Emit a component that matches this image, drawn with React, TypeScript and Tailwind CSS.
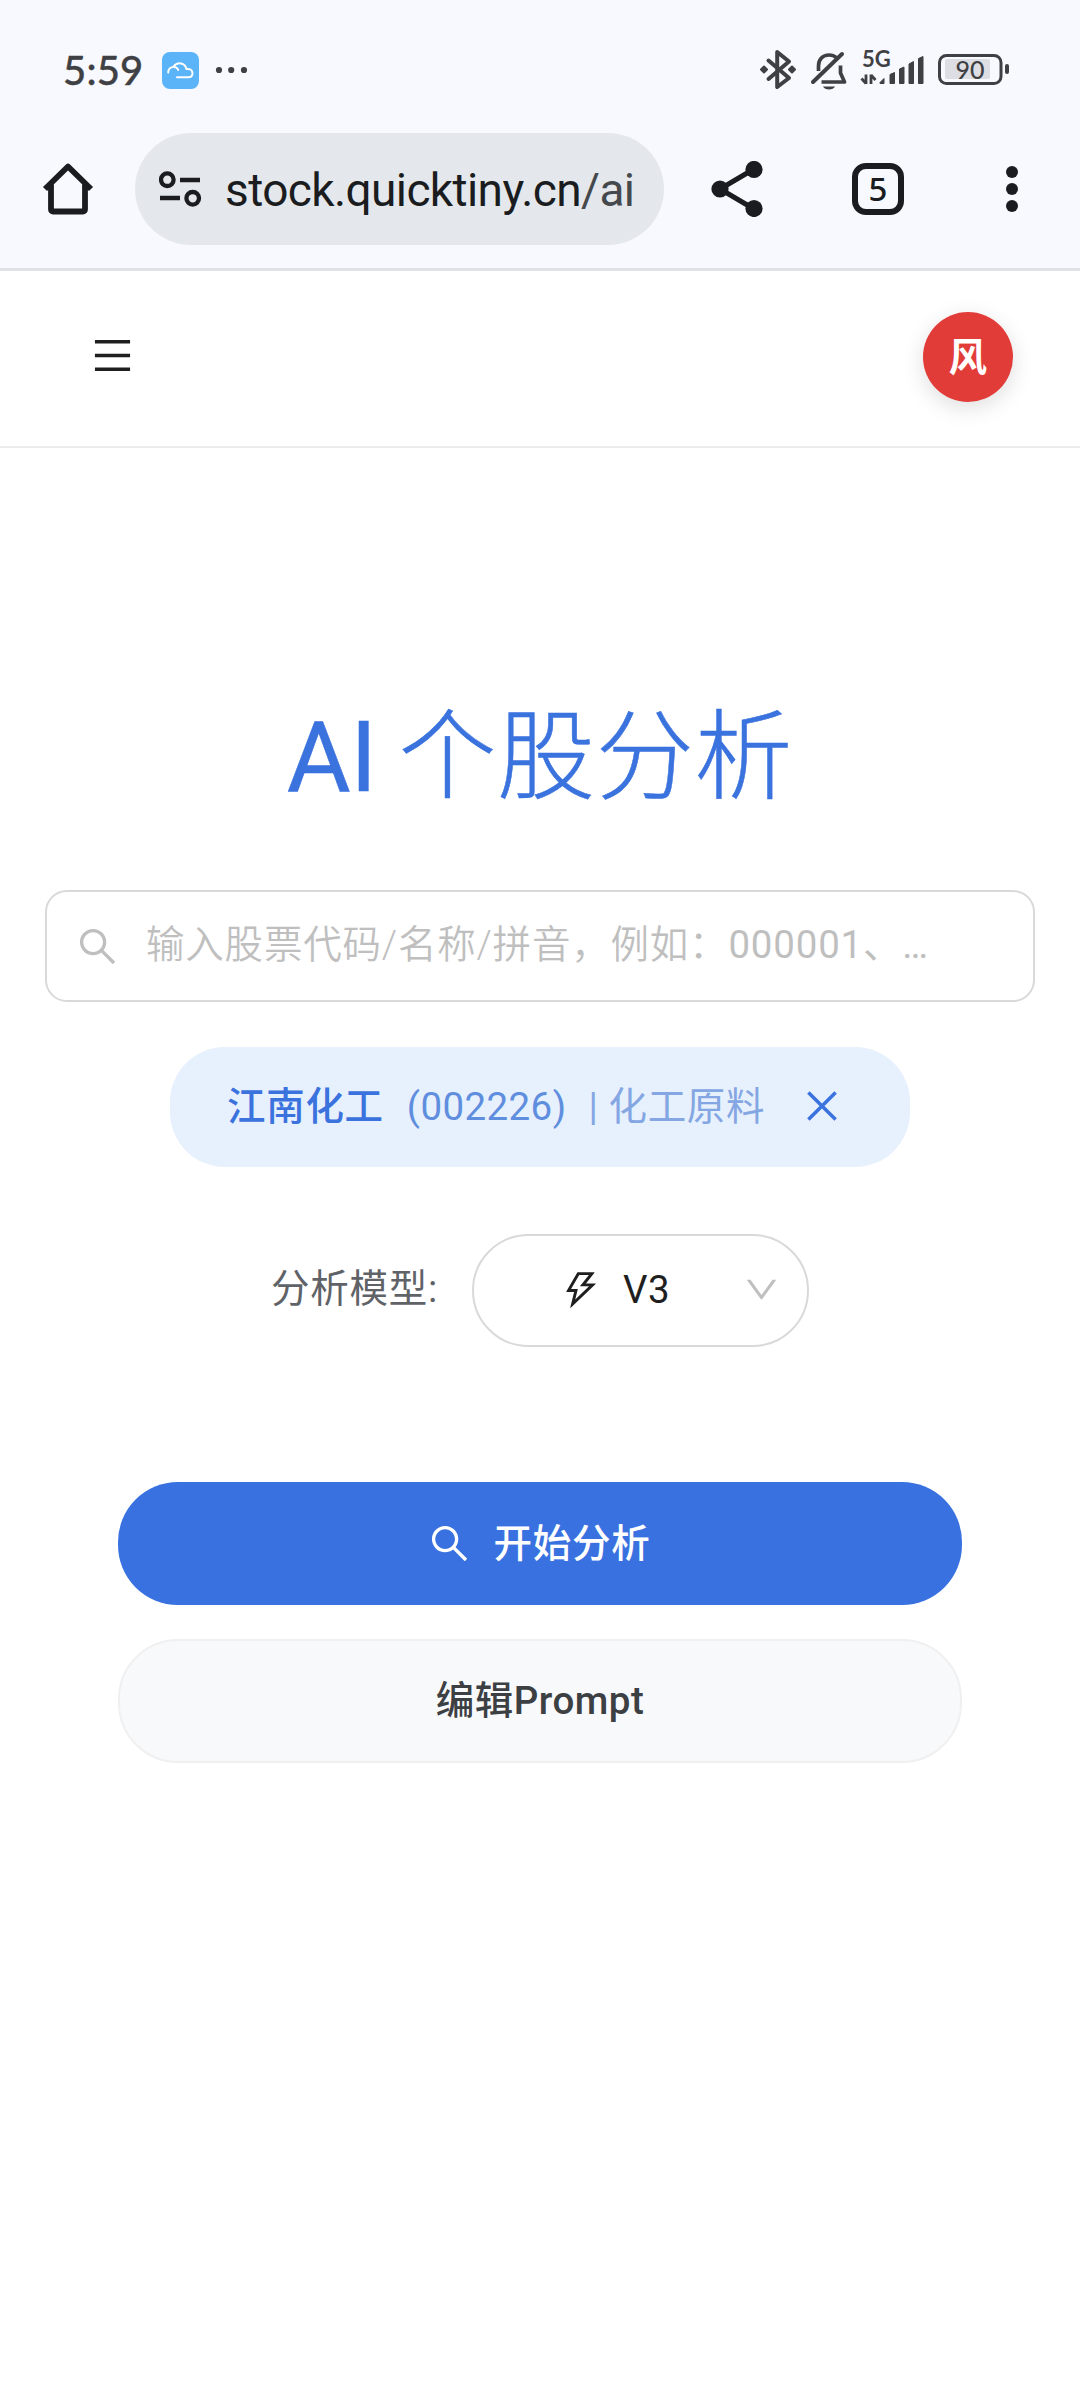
import React, { useState } from "react";
import {
  AiOutlineClose,
  AiOutlineDown,
  AiOutlineMenu,
  AiOutlineSearch,
  AiOutlineThunderbolt,
} from "react-icons/ai";

interface Stock {
  name: string;
  code: string;
  industry: string;
}

const stock: Stock = { name: "江南化工", code: "002226", industry: "化工原料" };

function StatusBar() {
  return (
    <div className="flex h-[133px] items-start justify-between pl-[63px] pr-[70px] pt-[46px] text-[#3f4043]">
      {/* Clock and notifications */}
      <div className="flex h-12 items-center">
        <span className="w-[99px] font-['Lato','Roboto',sans-serif] text-[40px] font-medium leading-none tracking-[0.2px] [-webkit-text-stroke:0.4px_currentColor]">
          5:59
        </span>
        <svg width="37" height="37" viewBox="0 0 37 37" fill="none">
          <rect width="37" height="37" rx="8" fill="#5bb3f8" />
          <path
            d="M6.200 20.500c0-6 8-7.500 10-2.500M11.500 14.500c4-5 11.500-4 13 2.500 3.500-.5 6 1.200 6 4.200s-2 4-4 4H15"
            stroke="#fff"
            strokeWidth="2"
            strokeLinecap="round"
          />
        </svg>
        <svg className="ml-4" width="34" height="8" viewBox="0 0 34 8" fill="currentColor">
          <circle cx="4" cy="4" r="3.100" />
          <circle cx="16.200" cy="4" r="3.100" />
          <circle cx="29" cy="4" r="3.100" />
        </svg>
      </div>

      {/* System indicators */}
      <svg width="250" height="48" viewBox="0 0 250 48" fill="none" stroke="currentColor">
        {/* Bluetooth */}
        <path
          d="M8.500 14.500 29 32 17.200 41V6L29 15.500 8.500 33"
          strokeWidth="4"
          strokeLinejoin="round"
          strokeLinecap="round"
        />
        <path
          d="m4 20.500 3 3-3 3-3-3zM32 20.500l3 3-3 3-3-3z"
          fill="currentColor"
          strokeWidth="2"
          strokeLinejoin="round"
        />
        {/* Muted bell */}
        <path
          d="M58.500 25v-5c0-6.500 4.200-11 10.500-11 3.200 0 5.400.8 7.200 2.500M80.500 19.500v7.500l4 9H61.500"
          strokeWidth="3.700"
          strokeLinejoin="round"
        />
        <path d="M53 36 82 8" strokeWidth="4" strokeLinecap="round" />
        <path d="M63 40.500h12c-1.500 4-10.500 4-12 0z" fill="currentColor" stroke="none" />
        {/* Signal */}
        <text
          x="102"
          y="21"
          fill="currentColor"
          stroke="none"
          className="font-['Lato','Roboto',sans-serif] text-[22px] font-bold"
        >
          5G
        </text>
        <path
          d="M106 28.500v9.500M106 37.500l-4.500-5M111 38v-9.500M111 29l4.500 5"
          strokeWidth="2.800"
          strokeLinejoin="round"
        />
        <path d="m120 36.500 4-4v5h-4z" fill="currentColor" strokeLinejoin="round" />
        <path
          d="M130 28.500 134.500 26.500v11H130zM139.500 23l4.500-2v16.500h-4.500zM149 18l4.500-2.500v22H149zM158.500 12.500l4.500-2v27h-4.500z"
          fill="currentColor"
          strokeLinejoin="round"
        />
        {/* Battery */}
        <rect x="179.500" y="9.500" width="61.500" height="28" rx="7" strokeWidth="3" />
        <rect x="185" y="13" width="45" height="20" rx="2" fill="#dddee3" stroke="none" />
        <rect x="245" y="18" width="4" height="10" rx="2" fill="currentColor" stroke="none" />
        <text
          x="210"
          y="33"
          textAnchor="middle"
          fill="currentColor"
          stroke="none"
          className="font-['Lato','Roboto',sans-serif] text-[25px] font-medium"
        >
          90
        </text>
      </svg>
    </div>
  );
}

function BrowserBar() {
  return (
    <div className="flex h-[112px] items-center text-[#1a1c20]">
      <svg className="ml-[42px]" width="52" height="54" viewBox="0 0 52 54" fill="none" stroke="currentColor">
        <path
          d="M3 27 26 4.500 49 27M9 22v25.500a2 2 0 0 0 2 2h30a2 2 0 0 0 2-2V22"
          strokeWidth="5.800"
          strokeLinejoin="round"
        />
      </svg>

      <div className="ml-[41px] flex h-[112px] w-[529px] items-center rounded-full bg-[#e4e8ec] pl-6">
        <svg width="43" height="36" viewBox="0 0 43 36" fill="none" stroke="currentColor" strokeWidth="4.300">
          <circle cx="8.300" cy="8.700" r="6.300" />
          <circle cx="33.700" cy="27.300" r="6.300" />
          <path d="M21 9h20M1 27h20" />
        </svg>
        <span className="ml-[23px] whitespace-nowrap pt-0.5 font-['Roboto',sans-serif] text-[46px] tracking-[-0.6px]">
          stock.quicktiny.cn<span className="text-[#45484d]">/ai</span>
        </span>
      </div>

      <svg className="ml-[47px]" width="52" height="56" viewBox="0 0 52 56" fill="currentColor">
        <path d="M43 8 9 28l34 20" fill="none" stroke="currentColor" strokeWidth="5" />
        <circle cx="9" cy="28" r="8.600" />
        <circle cx="43" cy="8.500" r="8.600" />
        <circle cx="43" cy="47.500" r="8.600" />
      </svg>

      <div className="ml-[89px] flex h-[52px] w-[52px] items-center justify-center rounded-[14px] border-[6px] border-current pb-px font-['Noto_Sans',sans-serif] text-[33px] font-medium leading-none">
        5
      </div>

      <svg className="ml-[102px]" width="12" height="46" viewBox="0 0 12 46" fill="currentColor">
        <circle cx="6" cy="6" r="6" />
        <circle cx="6" cy="23" r="6" />
        <circle cx="6" cy="40" r="6" />
      </svg>
    </div>
  );
}

export default function App() {
  const [selected, setSelected] = useState<Stock | null>(stock);

  return (
    <div className="flex h-[2400px] w-[1080px] flex-col overflow-hidden bg-white font-['Roboto','Noto_Sans_CJK_SC',sans-serif] text-[38.5px] tracking-[0.7px]">
      {/* Phone and browser chrome */}
      <div className="h-[271px] shrink-0 border-b-[3px] border-[#e0e2e8] bg-[#f8f9ff] tracking-normal">
        <StatusBar />
        <BrowserBar />
      </div>

      {/* Site header */}
      <header className="flex h-[177px] shrink-0 items-center justify-between border-b-2 border-[#ebebeb] pb-[3px] pl-[90px] pr-[67px]">
        <button className="pb-[3px]">
          <AiOutlineMenu size={45} color="#1f1f1f" />
        </button>
        <div className="flex h-[90px] w-[90px] items-center justify-center rounded-full bg-[#e23c39] pt-0.5 text-[38.5px] font-bold text-white shadow-[0_6px_22px_rgba(0,0,0,0.13)]">
          风
        </div>
      </header>

      <main className="flex flex-col items-center pt-[235px]">
        <h1 className="h-[150px] whitespace-nowrap text-[98px] leading-[150px] text-[#3a72de]">
          <span className="tracking-[-0.5px] [-webkit-text-stroke:0.5px_currentColor]">AI</span>{" "}
          <span className="-ml-[3px] font-light [-webkit-text-stroke:0.5px_currentColor]">个股分析</span>
        </h1>

        {/* Stock search */}
        <div className="mt-[57px] flex h-[112px] w-[990px] items-center rounded-[22px] border-2 border-[#d9d9d9] pl-7 text-[#bfbfbf]">
          <AiOutlineSearch size={45} />
          <span className="ml-[26px] whitespace-nowrap pb-0.5 font-[350] tracking-[0.8px]">
            输入股票代码/名称/拼音，例如：<span className="font-normal">000001、…</span>
          </span>
        </div>

        {/* Selected stock */}
        {selected && (
          <div className="mt-[45px] flex h-[120px] w-[740px] items-center whitespace-nowrap rounded-[55px] bg-[#e7f0fd] pl-[57px] text-[#3a72de]">
            <span className="font-medium">{selected.name}</span>
            <span className="ml-[23px] tracking-[0.4px] text-[#608ede]">({selected.code})</span>
            <span className="ml-[22px] tracking-[0.6px] text-[#84a6e2]">| {selected.industry}</span>
            <button className="ml-[35px] pb-[3px]" onClick={() => setSelected(null)}>
              <AiOutlineClose size={44} />
            </button>
          </div>
        )}

        {/* Model picker */}
        <div className="mt-[67px] flex h-[113px] items-center">
          <span className="pb-[3px] text-[#5f6368]">分析模型:</span>
          <button className="ml-[34px] flex h-[113px] w-[337px] items-center rounded-full border-2 border-[#d9d9d9] pb-0.5 pl-[85px] pr-[26px] text-[#1f1f1f]">
            <AiOutlineThunderbolt size={44} />
            <span className="ml-5">V3</span>
            <AiOutlineDown className="ml-auto" size={39} color="#bfbfbf" />
          </button>
        </div>

        {/* Actions */}
        <button className="mt-[135px] flex h-[123px] w-[844px] items-center justify-center rounded-[60px] bg-[#3972e0] pr-[3px] font-medium text-white">
          <AiOutlineSearch size={45} />
          <span className="ml-[22px]">开始分析</span>
        </button>
        <button className="mt-[34px] flex h-[124px] w-[844px] items-center justify-center rounded-[60px] border-2 border-[#f0f0f0] bg-[#f8f9fb] font-medium tracking-[0.5px] text-[#3c4043]">
          编辑Prompt
        </button>
      </main>
    </div>
  );
}
